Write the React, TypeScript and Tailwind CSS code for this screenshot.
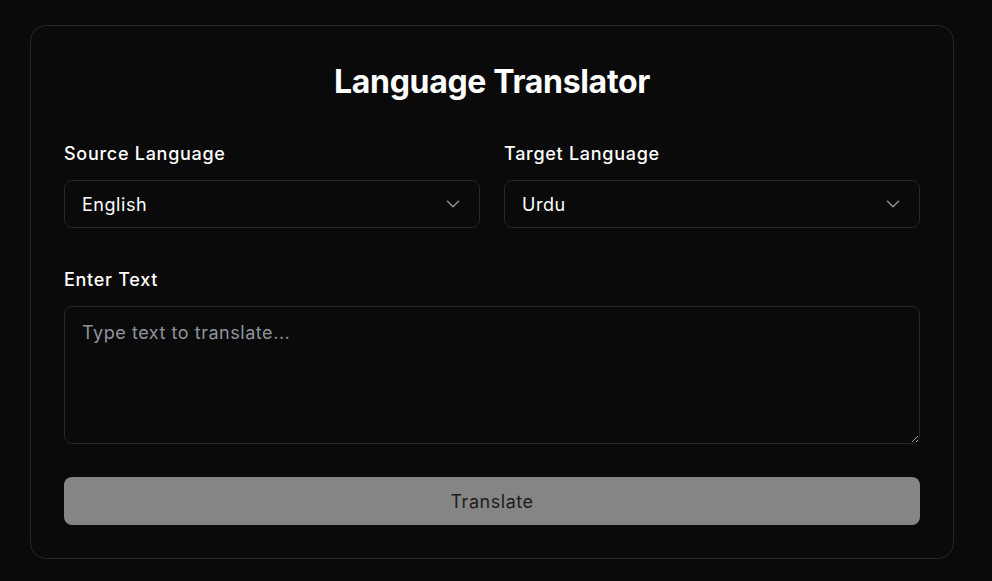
import React, { useState } from 'react';
import { ChevronDown } from 'lucide-react';

const languages = ['English', 'Urdu', 'Spanish', 'French', 'German', 'Arabic', 'Chinese', 'Hindi'];

interface LanguageSelectProps {
  label: string;
  value: string;
  onChange: (value: string) => void;
}

const LanguageSelect: React.FC<LanguageSelectProps> = ({ label, value, onChange }) => {
  return (
    <div>
      <label className="block text-lg font-medium leading-7 tracking-[0.04em] text-white mb-3">{label}</label>
      <div className="relative">
        <select
          value={value}
          onChange={(e) => onChange(e.target.value)}
          className="w-full h-12 appearance-none rounded-lg border border-[#262626] bg-[#0a0a0a] pl-[17px] pr-4 pt-px text-lg tracking-[0.03em] text-white outline-none"
        >
          {languages.map((lang) => (
            <option key={lang} value={lang}>
              {lang}
            </option>
          ))}
        </select>
        <ChevronDown
          size={22}
          strokeWidth={1.75}
          className="pointer-events-none absolute right-4 top-1/2 -translate-y-1/2 text-[#8c8c8c]"
        />
      </div>
    </div>
  );
};

const App: React.FC = () => {
  const [source, setSource] = useState('English');
  const [target, setTarget] = useState('Urdu');
  const [text, setText] = useState('');

  return (
    <div
      className="min-h-screen bg-[#0a0a0a] pt-[25px] pl-[30px] [color-scheme:dark]"
      style={{ fontFamily: 'Inter, "Noto Sans", sans-serif' }}
    >
      <div className="w-[924px] rounded-2xl border border-[#262626] bg-[#0a0a0a] px-[33px] pt-[34px] pb-[33px]">
        {/* Header */}
        <h1 className="text-center text-[32px] font-bold leading-[44px] tracking-[-0.01em] text-white mb-[36px]">
          Language Translator
        </h1>

        {/* Language pickers */}
        <div className="grid grid-cols-2 gap-6 mb-[38px]">
          <LanguageSelect label="Source Language" value={source} onChange={setSource} />
          <LanguageSelect label="Target Language" value={target} onChange={setTarget} />
        </div>

        {/* Input */}
        <div className="mb-[33px]">
          <label className="block text-lg font-medium leading-7 tracking-[0.04em] text-white mb-3">Enter Text</label>
          <textarea
            rows={4}
            value={text}
            onChange={(e) => setText(e.target.value)}
            placeholder="Type text to translate..."
            className="block w-full rounded-lg border border-[#262626] bg-[#0a0a0a] pl-[17px] pr-4 py-3 text-lg leading-7 tracking-[0.03em] text-white placeholder:text-[#8f949c] outline-none"
          />
        </div>

        <button
          disabled={!text}
          className="w-full h-12 rounded-lg bg-[#858585] pt-px text-lg tracking-[0.03em] text-[#1c1c1c]"
        >
          Translate
        </button>
      </div>
    </div>
  );
};

export default App;
